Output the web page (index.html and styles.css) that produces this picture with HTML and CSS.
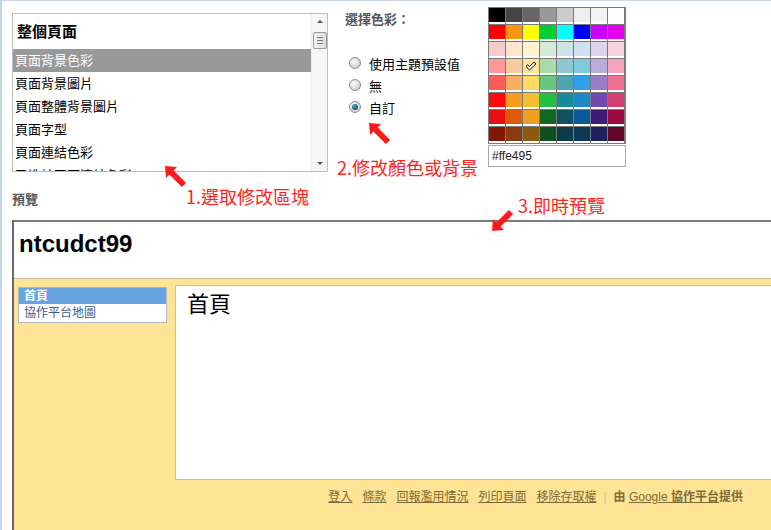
FILE: index.html
```html
<!DOCTYPE html>
<html lang="zh-Hant">
<head>
<meta charset="utf-8">
<title>協作平台 - 色彩與字型</title>
<link rel="stylesheet" href="styles.css">
</head>
<body>
<div class="page">
  <div class="editor">
    <div class="listbox">
      <div class="list">
        <div class="list-head">整個頁面</div>
        <div class="item sel">頁面背景色彩</div>
        <div class="item">頁面背景圖片</div>
        <div class="item">頁面整體背景圖片</div>
        <div class="item">頁面字型</div>
        <div class="item">頁面連結色彩</div>
        <div class="item">已造訪頁面連結色彩</div>
      </div>
      <div class="scrollbar">
        <svg class="sb-arrow" width="16" height="14" viewBox="0 0 16 14"><path d="M5 9 L8 6 L11 9 Z" fill="#555"/></svg>
        <div class="sb-thumb"><span></span><span></span><span></span></div>
        <div class="sb-track"></div>
        <svg class="sb-arrow" width="16" height="14" viewBox="0 0 16 14"><path d="M5 5 L8 8 L11 5 Z" fill="#555"/></svg>
      </div>
    </div>

    <div class="chooser">
      <div class="chooser-title">選擇色彩：</div>
      <div class="options">
        <div class="opt"><span class="radio"></span><span>使用主題預設值</span></div>
        <div class="opt"><span class="radio"></span><span>無</span></div>
        <div class="opt"><span class="radio on"></span><span>自訂</span></div>
      </div>
    </div>

    <div class="palette-wrap">
      <div class="palette">
        <span class="cell" style="background:#000000"></span><span class="cell" style="background:#444444"></span><span class="cell" style="background:#666666"></span><span class="cell" style="background:#999999"></span><span class="cell" style="background:#cccccc"></span><span class="cell" style="background:#eeeeee"></span><span class="cell" style="background:#f3f3f3"></span><span class="cell" style="background:#ffffff"></span>
        <span class="cell" style="background:#ff0000"></span><span class="cell" style="background:#fb9410"></span><span class="cell" style="background:#ffff00"></span><span class="cell" style="background:#00cc33"></span><span class="cell" style="background:#00ffff"></span><span class="cell" style="background:#0000ff"></span><span class="cell" style="background:#cc00ff"></span><span class="cell" style="background:#e800f0"></span>
        <span class="cell" style="background:#f8cccc"></span><span class="cell" style="background:#fce5cd"></span><span class="cell" style="background:#fff2cc"></span><span class="cell" style="background:#d4eadb"></span><span class="cell" style="background:#cde3e3"></span><span class="cell" style="background:#d0e0f0"></span><span class="cell" style="background:#dcd4ee"></span><span class="cell" style="background:#f8d3dc"></span>
        <span class="cell" style="background:#ff9999"></span><span class="cell" style="background:#f9cb9c"></span><span class="cell check" style="background:#ffe599"><svg width="12" height="10" viewBox="0 0 12 10"><path d="M1 5.5 L2.8 3.8 L4.6 5.6 L9.2 1 L11 2.8 L4.6 9 Z" fill="#fff" stroke="#000" stroke-width="1"/></svg></span><span class="cell" style="background:#a8dca8"></span><span class="cell" style="background:#8cc8d0"></span><span class="cell" style="background:#80c8dc"></span><span class="cell" style="background:#b8acd8"></span><span class="cell" style="background:#f4a4bc"></span>
        <span class="cell" style="background:#ff5a5a"></span><span class="cell" style="background:#f8b060"></span><span class="cell" style="background:#ffd966"></span><span class="cell" style="background:#66c880"></span><span class="cell" style="background:#4ea4b0"></span><span class="cell" style="background:#30a0e8"></span><span class="cell" style="background:#9a7cc8"></span><span class="cell" style="background:#f07090"></span>
        <span class="cell" style="background:#ff0a0a"></span><span class="cell" style="background:#f89c20"></span><span class="cell" style="background:#f4c030"></span><span class="cell" style="background:#22c040"></span><span class="cell" style="background:#1a8a9a"></span><span class="cell" style="background:#1d8ac8"></span><span class="cell" style="background:#7048b0"></span><span class="cell" style="background:#d04070"></span>
        <span class="cell" style="background:#e81010"></span><span class="cell" style="background:#e05808"></span><span class="cell" style="background:#f0a020"></span><span class="cell" style="background:#106820"></span><span class="cell" style="background:#105060"></span><span class="cell" style="background:#0a5a98"></span><span class="cell" style="background:#401c78"></span><span class="cell" style="background:#9a0a40"></span>
        <span class="cell" style="background:#801808"></span><span class="cell" style="background:#8a3a10"></span><span class="cell" style="background:#8a5a10"></span><span class="cell" style="background:#0e5020"></span><span class="cell" style="background:#0c3a48"></span><span class="cell" style="background:#0a3a58"></span><span class="cell" style="background:#202060"></span><span class="cell" style="background:#600828"></span>
      </div>
      <div class="hex">#ffe495</div>
    </div>
  </div>

  <div class="preview-label">預覽</div>

  <div class="frame">
    <div class="site-head">ntcudct99</div>
    <div class="site-body">
      <div class="nav">
        <div class="nav-sel">首頁</div>
        <div class="nav-item">協作平台地圖</div>
      </div>
      <div class="main">
        <div class="main-title">首頁</div>
      </div>
    </div>
    <div class="footer">
      <a class="flink">登入</a>
      <a class="flink">條款</a>
      <a class="flink">回報濫用情況</a>
      <a class="flink">列印頁面</a>
      <a class="flink">移除存取權</a>
      <span class="sep">|</span>
      <span class="by"><b>由</b> <a class="flink"><span class="g">Google</span> <b>協作平台</b></a><b>提供</b></span>
    </div>
  </div>

  <svg class="arrow a1" width="22" height="22" viewBox="0 0 22 22"><polygon points="0,0 12,1 8.6,4.4 21.1,16.9 16.9,21.1 4.4,8.6 1,12" fill="#ff1a1a"/></svg>
  <div class="note n1">1.選取修改區塊</div>
  <svg class="arrow a2" width="22" height="22" viewBox="0 0 22 22"><polygon points="0,0 12,1 8.6,4.4 21.1,16.9 16.9,21.1 4.4,8.6 1,12" fill="#ff1a1a"/></svg>
  <div class="note n2">2.修改顏色或背景</div>
  <svg class="arrow a3" width="22" height="22" viewBox="0 0 22 22"><polygon points="0,22 12,21 8.6,17.6 21.1,5.1 16.9,0.9 4.4,13.4 1,10" fill="#ff1a1a"/></svg>
  <div class="note n3">3.即時預覽</div>
</div>
</body>
</html>
```
FILE: styles.css
```css
* { box-sizing: border-box; }
html, body { margin: 0; padding: 0; }
body {
  width: 771px;
  height: 530px;
  overflow: hidden;
  background: #fff;
  font-family: "Liberation Sans", "Noto Sans CJK TC", sans-serif;
  color: #000;
}
.page {
  position: relative;
  height: 530px;
  border-top: 1px solid #cdd8ec;
  border-left: 2px solid #c4d2ec;
}

/* ---------- editor row ---------- */
.editor {
  display: flex;
  align-items: flex-start;
  height: 187px;
}
.listbox {
  margin: 12px 0 0 10px;
  width: 316px;
  height: 159px;
  border: 1px solid #bdbdbd;
  display: flex;
  overflow: hidden;
  background: #fff;
}
.list {
  width: 298px;
  overflow: hidden;
}
.list-head {
  height: 35px;
  line-height: 36px;
  padding-left: 4px;
  font-size: 15px;
  font-weight: bold;
}
.item {
  height: 23px;
  line-height: 23px;
  padding-left: 2px;
  font-size: 13px;
  white-space: nowrap;
}
.item.sel {
  background: #999;
  color: #fff;
}
.scrollbar {
  width: 16px;
  display: flex;
  flex-direction: column;
  align-items: center;
  background: #f6f6f6;
  border-left: 1px solid #ececec;
}
.sb-arrow { display: block; flex: none; }
.sb-thumb {
  margin-top: 4px;
  width: 14px;
  height: 17px;
  border: 1px solid #9a9a9a;
  border-radius: 2px;
  background: linear-gradient(90deg, #f4f4f4, #dcdcdc);
  display: flex;
  flex-direction: column;
  align-items: center;
  justify-content: center;
  gap: 2px;
}
.sb-thumb span {
  display: block;
  width: 6px;
  height: 1px;
  background: #777;
}
.sb-track { flex: 1; }

/* ---------- chooser ---------- */
.chooser {
  margin: 11px 0 0 17px;
  width: 143px;
}
.chooser-title {
  font-size: 13px;
  line-height: 16px;
  font-weight: bold;
  color: #555;
}
.options {
  margin-top: 24px;
  padding-left: 4px;
}
.opt {
  display: flex;
  align-items: center;
  gap: 8px;
  height: 22px;
  font-size: 13px;
}
.radio {
  width: 12px;
  height: 12px;
  border-radius: 50%;
  border: 1px solid #8e8f8f;
  background: radial-gradient(circle at 40% 35%, #fafafa, #d2d2d2 70%, #bdbdbd);
  display: flex;
  align-items: center;
  justify-content: center;
  flex: none;
}
.radio.on::after {
  content: "";
  width: 6px;
  height: 6px;
  border-radius: 50%;
  background: radial-gradient(circle at 40% 35%, #5aa7c8, #14506e 70%);
}

/* ---------- palette ---------- */
.palette-wrap {
  margin-top: 6px;
  width: 138px;
}
.palette {
  display: grid;
  grid-template-columns: repeat(8, 16px);
  grid-auto-rows: 16px;
  gap: 1px;
  padding: 1px;
  background: #7a7a7a;
  width: 138px;
}
.cell {
  display: flex;
  align-items: center;
  justify-content: center;
  box-shadow: inset 0 -2px 0 #fff;
}
.cell svg { display: block; margin-top: -2px; }
.hex {
  margin-top: 1px;
  height: 22px;
  border: 1px solid #a9a9a9;
  padding-left: 3px;
  font-size: 12px;
  line-height: 20px;
  color: #222;
  background: #fff;
}

/* ---------- preview ---------- */
.preview-label {
  height: 32px;
  padding: 5px 0 0 10px;
  font-size: 13px;
  line-height: 14px;
  font-weight: bold;
  color: #555;
}
.frame {
  margin-left: 10px;
  width: 800px;
  height: 330px;
  border-left: 2px solid #6a6a6a;
  border-top: 2px solid #7a7a7a;
  background: #ffe495;
}
.site-head {
  height: 57px;
  background: #fff;
  border-bottom: 1px solid #cbbd95;
  padding: 10px 0 0 5px;
  font-family: "Liberation Sans", Arial, sans-serif;
  font-size: 24px;
  line-height: 24px;
  font-weight: bold;
}
.site-body {
  display: flex;
  align-items: flex-start;
}
.nav {
  margin: 8px 0 0 4px;
  width: 149px;
  border: 1px solid #aeb8c8;
  background: #fff;
  font-size: 12px;
}
.nav-sel {
  height: 16px;
  line-height: 16px;
  padding-left: 5px;
  background: #66a3e0;
  color: #fff;
  font-weight: bold;
}
.nav-item {
  height: 18px;
  line-height: 18px;
  padding-left: 5px;
  color: #3b5b8f;
}
.main {
  margin: 6px 0 0 8px;
  flex: 1;
  height: 195px;
  background: #fff;
  border: 1px solid #cdbf98;
  padding: 5px 0 0 11px;
}
.main-title {
  font-size: 22px;
  line-height: 28px;
}
.footer {
  display: flex;
  justify-content: flex-end;
  align-items: center;
  gap: 10px;
  padding: 10px 69px 0 0;
  font-size: 12px;
  line-height: 14px;
  color: #7d6a36;
  white-space: nowrap;
}
.flink {
  color: #7d6a36;
  text-decoration: underline;
}
.sep {
  color: #d9c27e;
  margin: 0 -3px;
}
.by b { font-weight: bold; }
.g { font-weight: normal; }

/* ---------- annotations ---------- */
.arrow {
  position: absolute;
  display: block;
}
.a1 { left: 163px; top: 165px; }
.a2 { left: 367px; top: 122px; }
.a3 { left: 490px; top: 208px; }
.note {
  position: absolute;
  font-family: "Noto Sans CJK TC", sans-serif;
  font-size: 18px;
  line-height: 20px;
  color: #ff2424;
  white-space: nowrap;
}
.n1 { left: 184px; top: 185px; }
.n2 { left: 335px; top: 156px; }
.n3 { left: 516px; top: 194px; }
```
